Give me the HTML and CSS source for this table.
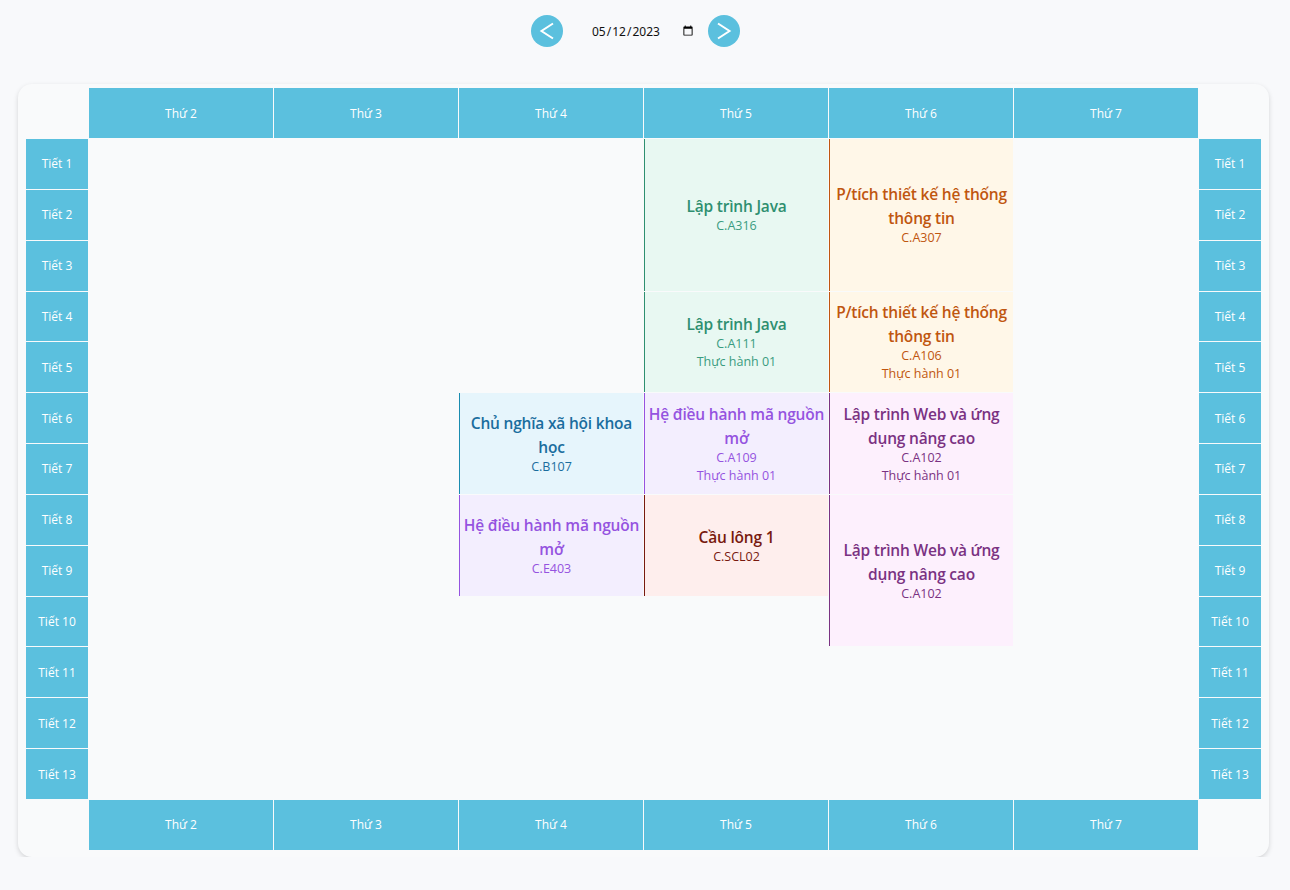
FILE: index.html
```html
<!DOCTYPE html>
<html lang="vi">
<head>
<meta charset="utf-8">
<title>Thời khóa biểu</title>
<link rel="stylesheet" href="styles.css">
</head>
<body>
<div class="nav">
  <button class="nav-btn prev" aria-label="Tuần trước">
    <svg width="32" height="32" viewBox="0 0 32 32"><path d="M22 8.5 L10.5 16 L22 23.5" fill="none" stroke="#fff" stroke-width="2"/></svg>
  </button>
  <input class="date" type="date" value="2023-05-12">
  <button class="nav-btn next" aria-label="Tuần sau">
    <svg width="32" height="32" viewBox="0 0 32 32"><path d="M10 8.5 L21.5 16 L10 23.5" fill="none" stroke="#fff" stroke-width="2"/></svg>
  </button>
</div>

<div class="card">
  <div class="grid">
    <div class="corner"></div>
    <div class="head">Thứ 2</div>
    <div class="head">Thứ 3</div>
    <div class="head">Thứ 4</div>
    <div class="head">Thứ 5</div>
    <div class="head">Thứ 6</div>
    <div class="head">Thứ 7</div>
    <div class="corner"></div>

    <div class="period left" style="grid-row:2">Tiết 1</div>
    <div class="period left" style="grid-row:3">Tiết 2</div>
    <div class="period left" style="grid-row:4">Tiết 3</div>
    <div class="period left" style="grid-row:5">Tiết 4</div>
    <div class="period left" style="grid-row:6">Tiết 5</div>
    <div class="period left" style="grid-row:7">Tiết 6</div>
    <div class="period left" style="grid-row:8">Tiết 7</div>
    <div class="period left" style="grid-row:9">Tiết 8</div>
    <div class="period left" style="grid-row:10">Tiết 9</div>
    <div class="period left" style="grid-row:11">Tiết 10</div>
    <div class="period left" style="grid-row:12">Tiết 11</div>
    <div class="period left" style="grid-row:13">Tiết 12</div>
    <div class="period left" style="grid-row:14">Tiết 13</div>

    <div class="period right" style="grid-row:2">Tiết 1</div>
    <div class="period right" style="grid-row:3">Tiết 2</div>
    <div class="period right" style="grid-row:4">Tiết 3</div>
    <div class="period right" style="grid-row:5">Tiết 4</div>
    <div class="period right" style="grid-row:6">Tiết 5</div>
    <div class="period right" style="grid-row:7">Tiết 6</div>
    <div class="period right" style="grid-row:8">Tiết 7</div>
    <div class="period right" style="grid-row:9">Tiết 8</div>
    <div class="period right" style="grid-row:10">Tiết 9</div>
    <div class="period right" style="grid-row:11">Tiết 10</div>
    <div class="period right" style="grid-row:12">Tiết 11</div>
    <div class="period right" style="grid-row:13">Tiết 12</div>
    <div class="period right" style="grid-row:14">Tiết 13</div>

    <div class="course green" style="grid-column:5;grid-row:2 / span 3">
      <div class="title">Lập trình Java</div>
      <div class="sub">C.A316</div>
    </div>
    <div class="course orange" style="grid-column:6;grid-row:2 / span 3">
      <div class="title">P/tích thiết kế hệ thống thông tin</div>
      <div class="sub">C.A307</div>
    </div>
    <div class="course green" style="grid-column:5;grid-row:5 / span 2">
      <div class="title">Lập trình Java</div>
      <div class="sub">C.A111</div>
      <div class="sub">Thực hành 01</div>
    </div>
    <div class="course orange" style="grid-column:6;grid-row:5 / span 2">
      <div class="title">P/tích thiết kế hệ thống thông tin</div>
      <div class="sub">C.A106</div>
      <div class="sub">Thực hành 01</div>
    </div>
    <div class="course blue" style="grid-column:4;grid-row:7 / span 2">
      <div class="title">Chủ nghĩa xã hội khoa học</div>
      <div class="sub">C.B107</div>
    </div>
    <div class="course purple" style="grid-column:5;grid-row:7 / span 2">
      <div class="title">Hệ điều hành mã nguồn mở</div>
      <div class="sub">C.A109</div>
      <div class="sub">Thực hành 01</div>
    </div>
    <div class="course plum" style="grid-column:6;grid-row:7 / span 2">
      <div class="title">Lập trình Web và ứng dụng nâng cao</div>
      <div class="sub">C.A102</div>
      <div class="sub">Thực hành 01</div>
    </div>
    <div class="course purple" style="grid-column:4;grid-row:9 / span 2">
      <div class="title">Hệ điều hành mã nguồn mở</div>
      <div class="sub">C.E403</div>
    </div>
    <div class="course red" style="grid-column:5;grid-row:9 / span 2">
      <div class="title">Cầu lông 1</div>
      <div class="sub">C.SCL02</div>
    </div>
    <div class="course plum" style="grid-column:6;grid-row:9 / span 3">
      <div class="title">Lập trình Web và ứng dụng nâng cao</div>
      <div class="sub">C.A102</div>
    </div>

    <div class="corner" style="grid-row:15"></div>
    <div class="head" style="grid-row:15">Thứ 2</div>
    <div class="head" style="grid-row:15">Thứ 3</div>
    <div class="head" style="grid-row:15">Thứ 4</div>
    <div class="head" style="grid-row:15">Thứ 5</div>
    <div class="head" style="grid-row:15">Thứ 6</div>
    <div class="head" style="grid-row:15">Thứ 7</div>
    <div class="corner" style="grid-row:15"></div>
  </div>
</div>
</body>
</html>
```

FILE: styles.css
```css
* { box-sizing: border-box; }

html, body {
  margin: 0;
  background: #f8f9fb;
}

body {
  font-family: "Open Sans", "Noto Sans", sans-serif;
  color: #212529;
  padding: 15px 18px 0 18px;
}

.nav {
  display: flex;
  justify-content: center;
  align-items: center;
  height: 32px;
  margin-bottom: 37px;
  padding-right: 19px;
}

.nav-btn {
  width: 32px;
  height: 32px;
  border-radius: 50%;
  border: none;
  padding: 0;
  background: #5bc0de;
  display: flex;
  align-items: center;
  justify-content: center;
  cursor: pointer;
}

.nav-btn.prev { margin-right: 28px; }
.nav-btn.next { margin-left: 12px; }

.date {
  border: none;
  background: transparent;
  font-family: "Noto Sans", sans-serif;
  font-size: 12px;
  color: #111;
  padding: 2px 0;
  width: 105px;
}

.card {
  width: 1251px;
  background: #f9fafb;
  border-radius: 14px;
  box-shadow: 0 2px 5px rgba(0,0,0,0.15);
  padding: 4px 8px 7px 8px;
}

.grid {
  display: grid;
  grid-template-columns: 62px repeat(6, 184px) 62px;
  grid-template-rows: 50px repeat(13, 1fr) 50px;
  height: 762px;
  gap: 1px;
}

.head {
  background: #5bc0de;
  color: #fff;
  font-size: 12px;
  display: flex;
  align-items: center;
  justify-content: center;
}

.period {
  background: #5bc0de;
  color: #fff;
  font-size: 12px;
  display: flex;
  align-items: center;
  justify-content: center;
}

.period.left { grid-column: 1; }
.period.right { grid-column: 8; }

.course {
  display: flex;
  flex-direction: column;
  align-items: center;
  justify-content: center;
  text-align: center;
  border-left: 1px solid;
  padding: 0 3px;
}

.title {
  font-size: 15.5px;
  font-weight: 600;
  line-height: 24px;
  letter-spacing: -0.2px;
  margin-bottom: -1px;
}

.sub {
  font-size: 12.5px;
  line-height: 18px;
}

.green { background: #e8f8f2; color: #2e8f70; border-color: #2e8f70; }
.green .sub { color: #3a9c80; }
.orange { background: #fff7e8; color: #c0560f; border-color: #c0560f; }
.blue { background: #e6f5fc; color: #1a6d9e; border-color: #1a8cb0; }
.purple { background: #f3eefe; color: #9553e0; border-color: #9553e0; }
.red { background: #feeeed; color: #78190f; border-color: #78190f; }
.plum { background: #fdf0fd; color: #7a3282; border-color: #7a3282; }
```
